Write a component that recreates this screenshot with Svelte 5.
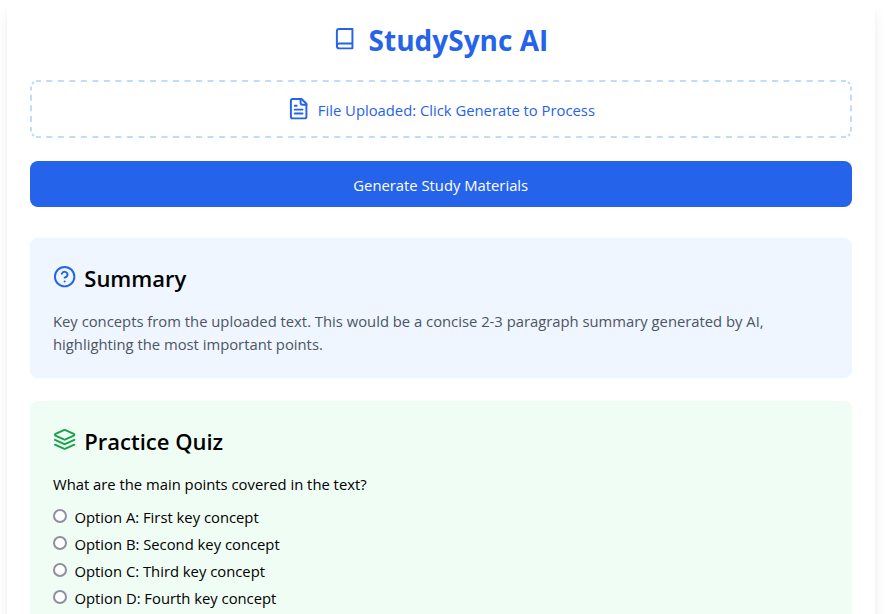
<script>
  const options = [
    { label: 'Option A: First key concept', value: 'a' },
    { label: 'Option B: Second key concept', value: 'b' },
    { label: 'Option C: Third key concept', value: 'c' },
    { label: 'Option D: Fourth key concept', value: 'd' }
  ];
</script>

<main class="sheet">
  <h1>
    <svg class="icon book" viewBox="0 0 24 24"><path d="M4 19.5v-15A2.5 2.5 0 0 1 6.5 2H20v20H6.5a2.5 2.5 0 0 1 0-5H20" /></svg>
    <span>StudySync AI</span>
  </h1>

  <div class="upload">
    <svg class="dashes" viewBox="0 0 822 58">
      <path d="M16.3 1H812M16.3 57H812" stroke-dasharray="6 5.52" />
      <path d="M1 14.7V46M821 14.7V46" stroke-dasharray="6 4.67" />
      <path d="M6 1H11M6 57H11M811 1H816M811 57H816M1 6.5V10.5M1 46.7V51.5M821 6.5V10.5M821 46.7V51.5" />
      <path d="M2 4L4 2M2 54L4 56M818 2L820 4M818 56L820 54" />
    </svg>
    <svg class="icon file" viewBox="0 0 24 24"><path d="M15 2H6a2 2 0 0 0-2 2v16a2 2 0 0 0 2 2h12a2 2 0 0 0 2-2V7Z" /><path d="M14 2v4a2 2 0 0 0 2 2h4M10 9H8M16 13H8M16 17H8" /></svg>
    <span>File Uploaded: Click Generate to Process</span>
  </div>

  <button><span>Generate Study Materials</span></button>

  <section class="summary">
    <h2>
      <svg class="icon" viewBox="0 0 24 24"><circle cx="12" cy="12" r="10" /><path d="M9.09 9a3 3 0 0 1 5.83 1c0 2-3 3-3 3M12 17h.01" /></svg>
      <span class="t-summary">Summary</span>
    </h2>
    <p><span class="line1">Key concepts from the uploaded text. This would be a concise 2-3 paragraph summary generated by AI,</span><br /><span class="line2">highlighting the most important points.</span></p>
  </section>

  <section class="quiz">
    <h2>
      <svg class="icon" viewBox="0 0 24 24"><path d="m12.83 2.18a2 2 0 0 0-1.66 0L2.6 6.08a1 1 0 0 0 0 1.83l8.58 3.91a2 2 0 0 0 1.66 0l8.58-3.9a1 1 0 0 0 0-1.83Z" /><path d="m22 12.18-9.17 4.16a2 2 0 0 1-1.66 0L2 12.18M22 17.18l-9.17 4.16a2 2 0 0 1-1.66 0L2 17.18" /></svg>
      <span class="t-quiz">Practice Quiz</span>
    </h2>
    <p class="question">What are the main points covered in the text?</p>
    {#each options as option}
      <label><input type="radio" name="quiz" value={option.value} /><span>{option.label}</span></label>
    {/each}
  </section>
</main>

<style>
  :global(body) {
    background: #fff;
    overflow: hidden;
  }
  .sheet {
    box-sizing: border-box;
    width: 868px;
    height: 700px;
    margin-left: 7px;
    padding: 23px 23.5px 0 23px;
    border-radius: 8px;
    background: #fff;
    box-shadow: 0 10px 15px -3px rgba(0, 0, 0, 0.1), 0 4px 6px -4px rgba(0, 0, 0, 0.1);
    font: 14.8px/23px 'Open Sans', 'Noto Sans', sans-serif;
    color: #000;
  }
  .icon {
    width: 23.3px;
    height: 23.3px;
    flex: none;
    fill: none;
    stroke: #2563eb;
    stroke-width: 2;
    stroke-linecap: round;
    stroke-linejoin: round;
  }
  h1 {
    display: flex;
    justify-content: center;
    align-items: center;
    height: 35px;
    margin: 0 0 21.5px;
    color: #2563eb;
    font-size: 28px;
    font-weight: 700;
    line-height: 35px;
    white-space: nowrap;
  }
  .book {
    margin: 0 12px 4px 0;
  }
  .upload {
    position: relative;
    display: flex;
    justify-content: center;
    align-items: center;
    height: 58px;
    margin-bottom: 23px;
    color: #2563eb;
  }
  .upload > span {
    margin-top: 3px;
  }
  .dashes {
    position: absolute;
    inset: 0;
    width: 822px;
    height: 58px;
    fill: none;
    stroke: #bfdbfe;
    stroke-width: 2;
  }
  .file {
    margin-right: 8px;
  }
  button {
    display: block;
    width: 100%;
    height: 46.5px;
    margin: 0 0 31px;
    padding: 3px 0 0;
    border: 0;
    border-radius: 8px;
    background: #2563eb;
    color: #fff;
    font: inherit;
  }
  section {
    box-sizing: border-box;
    padding: 23px;
    border-radius: 8px;
  }
  .summary {
    height: 139.5px;
    margin-bottom: 23.5px;
    background: #eff6ff;
  }
  .quiz {
    height: 300px;
    background: #f0fdf4;
  }
  .quiz .icon {
    stroke: #16a34a;
  }
  h2 {
    display: flex;
    align-items: center;
    height: 35px;
    margin: 0 0 14px;
    font-size: 22px;
    font-weight: 600;
    line-height: 35px;
  }
  h2 .icon {
    margin: 0 8px 4px 0;
  }
  p {
    margin: 0;
    white-space: nowrap;
  }
  .summary p {
    color: #4b5563;
  }
  .question {
    margin-bottom: 8px;
  }
  label {
    display: flex;
    align-items: center;
    height: 27px;
  }
  input {
    appearance: none;
    box-sizing: border-box;
    width: 14px;
    height: 14px;
    margin: 0 7.5px 4px 0;
    border: 2px solid #8f8f9d;
    border-radius: 50%;
    background: #fff;
  }
</style>
